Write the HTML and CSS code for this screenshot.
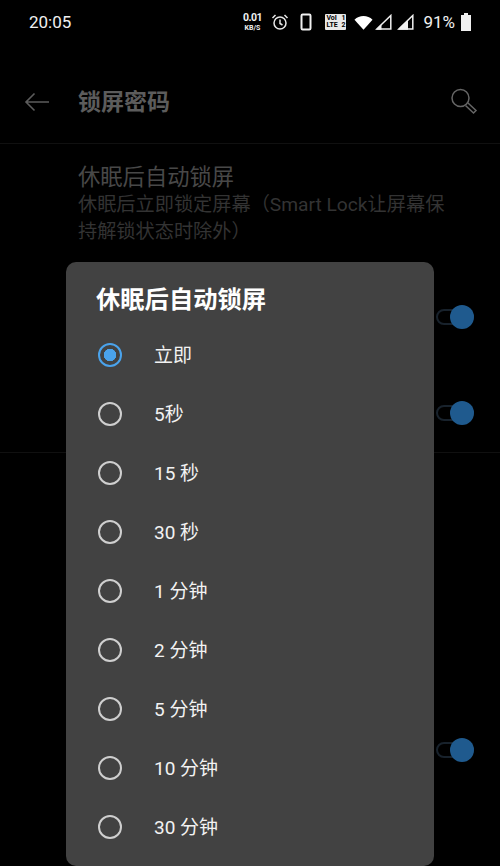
FILE: index.html
```html
<!DOCTYPE html>
<html lang="zh-CN">

<head>
    <meta charset="UTF-8">
    <meta name="viewport" content="width=device-width, initial-scale=1.0">
    <title>锁屏密码</title>
    <link rel="stylesheet" href="styles.css">
</head>

<body>
    <div class="pantalla">
        <header class="estado">
            <span class="hora">20:05</span>
            <div class="iconos">
                <div class="velocidad"><span class="vel-num">0.01</span><span class="vel-uni">KB/S</span></div>
                <svg class="ico-alarma" width="18" height="18" viewBox="0 0 18 18" fill="none" stroke="#e8e8e8" stroke-width="1.5">
                    <circle cx="9" cy="10" r="6"/>
                    <path d="M9 6.5V10.5L11.5 12M1.5 5L4.5 2M16.5 5L13.5 2"/>
                </svg>
                <svg class="ico-movil" width="12" height="18" viewBox="0 0 12 18" fill="none" stroke="#f0f0f0" stroke-width="2">
                    <rect x="1.5" y="1.5" width="9" height="15" rx="1.2"/>
                </svg>
                <div class="volte">
                    <div class="volte-fila"><span>VoI</span><span>1</span></div>
                    <div class="volte-fila"><span>LTE</span><span>2</span></div>
                </div>
                <svg class="ico-wifi" width="19" height="15" viewBox="0 0 20 15">
                    <path d="M0.5 4.5C5.5 -0.5 14.5 -0.5 19.5 4.5L10 15Z" fill="#fff"/>
                </svg>
                <svg class="ico-senal" width="17" height="16" viewBox="0 0 17 16" fill="none">
                    <path d="M15.8 1.5V15H1.8Z" stroke="#f0f0f0" stroke-width="1.5"/>
                    <path d="M1 15.8L6.5 10.3V15.8Z" fill="#f0f0f0"/>
                </svg>
                <svg class="ico-senal2" width="17" height="16" viewBox="0 0 17 16" fill="none">
                    <path d="M15.8 1.5V15H1.8Z" stroke="#f0f0f0" stroke-width="1.5"/>
                    <path d="M1 15.8L11 5.8V15.8Z" fill="#f0f0f0"/>
                </svg>
                <span class="bateria-num">91%</span>
                <svg class="ico-bateria" width="12" height="18" viewBox="0 0 12 18">
                    <path d="M4 0H8V2H11H11V18H1V2H4Z" fill="#f0f0f0"/>
                </svg>
            </div>
        </header>

        <div class="barra">
            <svg class="flecha" width="26" height="20" viewBox="0 0 26 20" fill="none" stroke="#5c5c5c" stroke-width="1.6">
                <path d="M25 10H2M10.5 1.5L2 10L10.5 18.5"/>
            </svg>
            <h1 class="titulo">锁屏密码</h1>
            <svg class="lupa" width="28" height="28" viewBox="0 0 28 28" fill="none" stroke="#666666" stroke-width="1.5">
                <circle cx="10.5" cy="10" r="8.5"/>
                <path d="M18 15L26 22.5L23.5 25L15.5 17.5"/>
            </svg>
        </div>

        <section class="opcion-texto">
            <div class="opcion-titulo">休眠后自动锁屏</div>
            <div class="opcion-sub">休眠后立即锁定屏幕（Smart Lock让屏幕保持解锁状态时除外）</div>
        </section>
        <div class="fila fila-a"><span class="interruptor"></span></div>
        <div class="fila fila-b"><span class="interruptor"></span></div>
        <div class="seccion">
            <div class="fila fila-c"><span class="interruptor"></span></div>
        </div>

        <div class="dialogo">
            <h2 class="dialogo-titulo">休眠后自动锁屏</h2>
            <ul class="lista">
                <li class="item activo"><span class="radio"></span>立即</li>
                <li class="item"><span class="radio"></span>5秒</li>
                <li class="item"><span class="radio"></span>15 秒</li>
                <li class="item"><span class="radio"></span>30 秒</li>
                <li class="item"><span class="radio"></span>1 分钟</li>
                <li class="item"><span class="radio"></span>2 分钟</li>
                <li class="item"><span class="radio"></span>5 分钟</li>
                <li class="item"><span class="radio"></span>10 分钟</li>
                <li class="item"><span class="radio"></span>30 分钟</li>
            </ul>
        </div>
    </div>
</body>

</html>
```

FILE: styles.css
```css
* {
    margin: 0;
    padding: 0;
    box-sizing: border-box;
    font-family: Roboto, "Noto Sans CJK SC", sans-serif;
}

html,
body {
    width: 500px;
    height: 866px;
    overflow: hidden;
    background-color: black;
}

.pantalla {
    position: relative;
    width: 500px;
    height: 866px;
    overflow: hidden;
    background-color: black;
}

.estado {
    display: flex;
    justify-content: space-between;
    align-items: center;
    height: 44px;
    padding: 0 28px 0 29px;
    color: #f0f0f0;
}

.hora {
    font-size: 17px;
}

.iconos {
    display: flex;
    align-items: center;
}

.velocidad {
    display: flex;
    flex-direction: column;
    align-items: center;
    width: 20px;
    margin-right: 9px;
    font-weight: 700;
    color: #f0f0f0;
}

.vel-num {
    font-size: 10.5px;
    line-height: 12px;
    letter-spacing: -0.5px;
}

.vel-uni {
    font-size: 7px;
    line-height: 8px;
}

.ico-alarma {
    margin-right: 11px;
}

.ico-movil {
    margin-right: 13px;
}

.volte {
    width: 21px;
    height: 16px;
    margin-right: 8px;
    padding: 1px;
    background-color: #e8e8e8;
    color: black;
    border-radius: 1px;
    font-size: 7px;
    line-height: 7px;
    font-weight: 700;
}

.volte-fila {
    display: flex;
    justify-content: space-between;
}

.ico-wifi {
    margin-right: 2px;
}

.ico-senal {
    margin-right: 5px;
}

.ico-senal2 {
    margin-right: 9px;
}

.bateria-num {
    margin-right: 5px;
    font-size: 17px;
}

.barra {
    display: flex;
    align-items: center;
    height: 100px;
    padding: 16px 22px 0 24px;
    border-bottom: 1px solid #101010;
}

.flecha {
    margin-right: 28px;
}

.titulo {
    flex: 1;
    margin-top: -3px;
    font-size: 23px;
    font-weight: 700;
    color: #5c5c5c;
}

.opcion-texto {
    height: 125px;
    padding: 18px 50px 0 78px;
}

.opcion-titulo {
    font-size: 22.3px;
    line-height: 30px;
    color: #484848;
}

.opcion-sub {
    margin-top: -1px;
    font-size: 19.2px;
    line-height: 27px;
    color: #333333;
}

.fila {
    display: flex;
    justify-content: flex-end;
    align-items: center;
    padding-right: 26px;
}

.fila-a {
    height: 96px;
}

.fila-b {
    height: 87px;
    padding-top: 8px;
}

.seccion {
    padding-top: 249px;
    border-top: 1px solid #101010;
}

.fila-c {
    height: 96px;
}

.interruptor {
    position: relative;
    display: block;
    width: 38px;
    height: 16px;
    border: 2px solid #18222c;
    border-radius: 8px;
}

.interruptor::after {
    content: "";
    position: absolute;
    top: -6px;
    right: -2px;
    width: 24px;
    height: 24px;
    background-color: #1f5a8e;
    border-radius: 50%;
}

.dialogo {
    position: absolute;
    top: 262px;
    left: 66px;
    width: 368px;
    height: 604px;
    padding: 0 30px;
    background-color: #424242;
    border-radius: 10px;
}

.dialogo-titulo {
    padding-top: 21px;
    height: 63px;
    font-size: 24.3px;
    line-height: 34px;
    font-weight: 700;
    color: white;
}

.lista {
    list-style: none;
}

.item {
    display: flex;
    align-items: center;
    height: 59px;
    padding-bottom: 3px;
    font-size: 19px;
    color: #f2f2f2;
}

.radio {
    flex: none;
    width: 24px;
    height: 24px;
    margin-top: 3px;
    margin-left: 2px;
    margin-right: 32px;
    border: 2.5px solid #cfcfcf;
    border-radius: 50%;
}

.activo .radio {
    border-color: #4aa3ec;
    background: radial-gradient(circle, #4aa3ec 0 6px, transparent 6.5px);
}
```
